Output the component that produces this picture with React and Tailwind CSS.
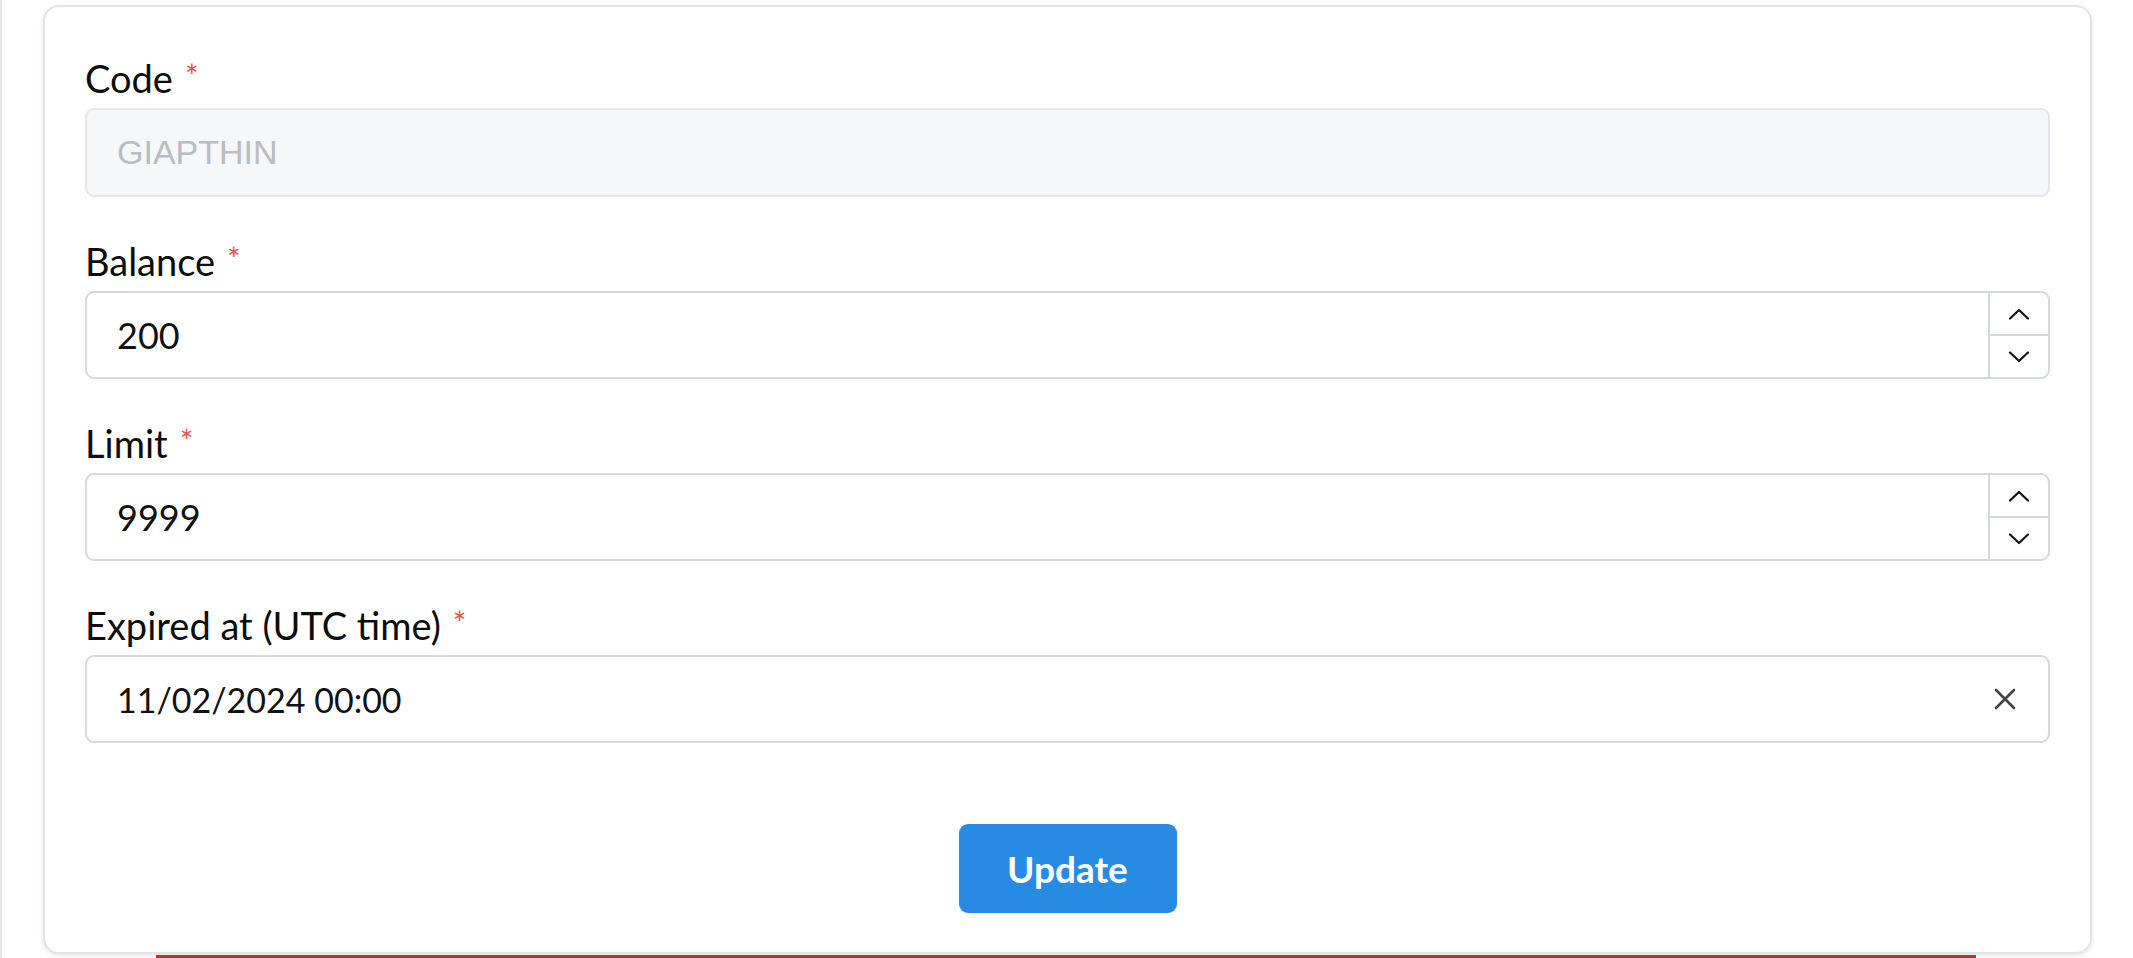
import React, { useState } from 'react';

const Chevron = ({ up }) => (
  <svg width="22" height="12" viewBox="0 0 22 12" fill="none" stroke="#111" strokeWidth="2.2" strokeLinecap="round" strokeLinejoin="round">
    {up ? <path d="M2 10.5 L11 2 L20 10.5" /> : <path d="M2 1.5 L11 10 L20 1.5" />}
  </svg>
);

const Label = ({ children }) => (
  <label className="flex items-start text-[38px] leading-[52px] text-[#0d0d0d]">
    <span>{children}</span>
    <span className="ml-[12px] mt-[9px] text-[32px] leading-[30px] text-[#e5534b]">*</span>
  </label>
);

const NumberField = ({ label, value, onChange }) => (
  <div>
    <Label>{label}</Label>
    <div className="mt-[4px] flex h-[88px] rounded-[9px] border-2 border-[#d5d8dc] bg-white">
      <input
        value={value}
        onChange={(e) => onChange(e.target.value)}
        className="min-w-0 flex-1 bg-transparent pl-[30px] text-[36px] text-[#111] outline-none"
      />
      <div className="flex w-[60px] flex-col border-l-2 border-[#d5d8dc]">
        <button onClick={() => onChange(String(Number(value) + 1))} className="flex flex-1 items-center justify-center border-b-2 border-[#d5d8dc]">
          <Chevron up />
        </button>
        <button onClick={() => onChange(String(Number(value) - 1))} className="flex flex-1 items-center justify-center">
          <Chevron />
        </button>
      </div>
    </div>
  </div>
);

export default function App() {
  const [balance, setBalance] = useState('200');
  const [limit, setLimit] = useState('9999');
  const [expired, setExpired] = useState('11/02/2024 00:00');

  return (
    <div className="h-[958px] w-full overflow-hidden bg-white" style={{ fontFamily: 'Lato, "Noto Sans", sans-serif' }}>
      <div className="flex h-full border-l-2 border-[#e6e7e9] pl-[41px] pr-[41px]">
        <div className="flex w-full flex-col">
          <div className="mt-[5px] h-[949px] rounded-[16px] border-2 border-[#e2e4e7] bg-white px-[40px] pt-[45px] shadow-[0_2px_5px_rgba(0,0,0,0.1)]">
            <div className="flex flex-col gap-[38px]">
              <div>
                <Label>Code</Label>
                <div className="mt-[4px] flex h-[89px] items-center rounded-[9px] border-2 border-[#e4e6e9] bg-[#f6f7f9] pl-[30px]">
                  <span className="text-[34px] text-[#b9bdc3]" style={{ fontFamily: '"Liberation Sans", Arial, sans-serif' }}>GIAPTHIN</span>
                </div>
              </div>
              <NumberField label="Balance" value={balance} onChange={setBalance} />
              <NumberField label="Limit" value={limit} onChange={setLimit} />
              <div>
                <Label>Expired at (UTC time)</Label>
                <div className="mt-[4px] flex h-[88px] items-center rounded-[9px] border-2 border-[#d5d8dc] bg-white pl-[30px] pr-[31px]">
                  <input
                    value={expired}
                    onChange={(e) => setExpired(e.target.value)}
                    className="min-w-0 flex-1 bg-transparent text-[34px] text-[#111] outline-none"
                  />
                  <button onClick={() => setExpired('')} className="flex h-[24px] w-[24px] items-center justify-center">
                    <svg width="22" height="22" viewBox="0 0 22 22" stroke="#444" strokeWidth="2.6" strokeLinecap="round">
                      <path d="M2 2 L20 20 M20 2 L2 20" />
                    </svg>
                  </button>
                </div>
              </div>
            </div>
            <div className="mt-[81px] flex justify-center">
              <button className="h-[89px] w-[218px] rounded-[9px] bg-[#278be4] text-[37px] font-bold text-white">
                Update
              </button>
            </div>
          </div>
          <div className="ml-[113px] mt-[1px] h-[3px] w-[1820px] bg-[#a93a33]" />
        </div>
      </div>
    </div>
  );
}
